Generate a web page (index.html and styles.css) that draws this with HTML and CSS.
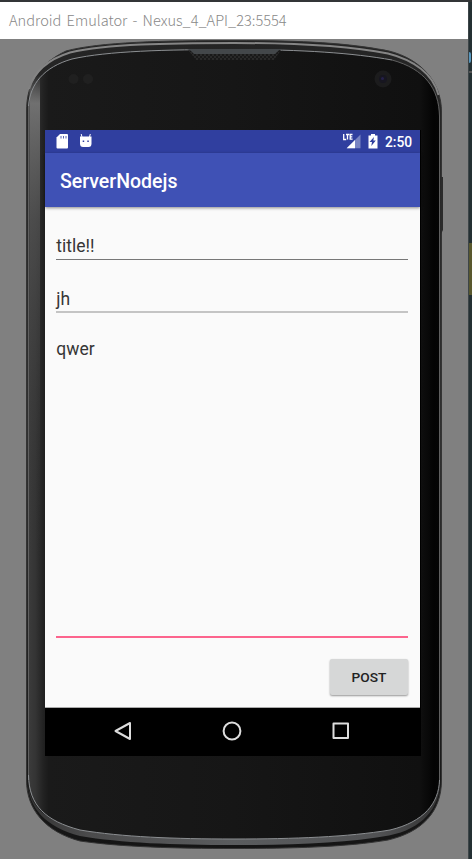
FILE: index.html
```html
<!DOCTYPE html>
<html lang="en">
<head>
<meta charset="utf-8">
<title>Android Emulator</title>
<link rel="stylesheet" href="styles.css">
</head>
<body>
<div class="desktop">
  <div class="window">
    <header class="titlebar"><span>Android Emulator - Nexus_4_API_23:5554</span></header>
    <main class="device">
      <svg class="shell" viewBox="0 39 468 820" width="468" height="820" aria-hidden="true">
        <defs>
          <linearGradient id="rim" x1="0" y1="40" x2="0" y2="849" gradientUnits="userSpaceOnUse">
            <stop offset="0" stop-color="#242424"/><stop offset=".5" stop-color="#303030"/><stop offset="1" stop-color="#151515"/>
          </linearGradient>
          <linearGradient id="face" x1="28" y1="0" x2="440" y2="0" gradientUnits="userSpaceOnUse">
            <stop offset="0" stop-color="#3c3c3c"/><stop offset=".018" stop-color="#343434"/><stop offset=".037" stop-color="#222"/><stop offset=".05" stop-color="#1a1a1a"/><stop offset=".5" stop-color="#161616"/><stop offset=".95" stop-color="#101010"/><stop offset=".985" stop-color="#040404"/><stop offset="1" stop-color="#050505"/>
          </linearGradient>
          <linearGradient id="side" x1="0" y1="0" x2="0" y2="1">
            <stop offset="0" stop-color="#777" stop-opacity="0"/><stop offset=".06" stop-color="#707070"/><stop offset=".3" stop-color="#555" stop-opacity=".7"/><stop offset="1" stop-color="#333" stop-opacity="0"/>
          </linearGradient>
          <linearGradient id="lip" x1="28" y1="0" x2="440" y2="0" gradientUnits="userSpaceOnUse">
            <stop offset="0" stop-color="#333"/><stop offset=".15" stop-color="#4b4b4c"/><stop offset=".5" stop-color="#5a5c5e"/><stop offset=".85" stop-color="#515254"/><stop offset="1" stop-color="#333"/>
          </linearGradient>
          <pattern id="mesh" width="4" height="4" patternUnits="userSpaceOnUse"><path d="M0 0h4v4H0z" fill="#292929"/><path d="M0 0h2v2H0zM2 2h2v2H2z" fill="#191919"/></pattern>
        </defs>
        <path fill="url(#rim)" stroke="#343434" d="M26.5 112C26.5 82 39 64 66 51C99 42 164 40.5 234 40.5C304 40.5 349 43 389 51C421 59 441.500 82 441.500 112V780C441.500 812 422 832 388 840C347 847 292 848.500 234 848.500C176 848.500 121 847 80 841C46 832 26.500 810 26.500 780Z"/>
        <path class="line light" d="M29 89C34 72 46 60 70 52.500C108 44 167 43 234 43C304 43 349 46 388 53.500C414 60 433 74 438.500 95"/>
        <path fill="url(#lip)" d="M28 782C29 806 46 821 80 830C122 837 174 839 234 839C294 839 348 837 390 830C424 822 439 803 440 782C440 808 422 829 389 835.500C348 843 294 845 234 845C174 845 121 843 80 836C46 827 28 808 28 782Z"/>
        <path fill="url(#face)" d="M29 106C30 84 44 67 72 59C108 51 165 50 234 50C303 50 353 53 392 60C425 69 439 89 439 116V780C439 803 424 822 390 830C348 837 294 839 234 839C174 839 122 837 80 830C46 821 29 806 29 780Z"/>
        <path fill="url(#side)" d="M29.500 84Q34 78 40 74V560H29.500Z"/>
        <path class="line silver" d="M28.500 106C30 84 44 67 72 59C108 51 165 49.500 234 49.500C303 49.500 353 53 392 60"/>
        <path class="line edge" d="M392 60C425 69 439 89 439.500 116V780M28.500 106V780"/>
        <path class="line silver" d="M28.500 775C29 806 46 821 80 830C122 837 174 839 234 839C294 839 348 837 390 830C424 822 439 803 439.500 780"/>
        <path d="M441 177h2v53l-2 4z" fill="#2b2b2b"/>
        <path d="M188 50h93l-7 10h-78z" fill="url(#mesh)"/>
        <path d="M187 49h95q-4 1-7 5h-81q-3-4-7-5z" fill="#43474a"/>
        <circle cx="73.500" cy="79" r="5" fill="#202020"/><circle cx="88" cy="79" r="5" fill="#202020"/>
        <circle cx="383" cy="79" r="8.500" fill="#1c1c1d"/><circle cx="383" cy="79" r="4" fill="#171620"/><circle cx="382.500" cy="78.500" r="1.500" fill="#25204a"/>
      </svg>
      <section class="screen">
        <div class="status">
          <svg class="status-left" width="50" height="23" viewBox="0 0 50 23">
            <path fill="#fff" d="M15 4h7q1 0 1 1v12.500q0 1-1 1H12.500q-1 0-1-1V7.500z"/><path d="M16 6v2.500M18.500 6v2.500M21 6v2.500" stroke="#303f9f" stroke-width=".8"/>
            <path fill="#fff" d="M35 6.500h11.500v7q0 3.500-3 3.500h-5.500q-3 0-3-3.500z"/><path d="M37 7l-.8-3M44.500 7l.8-3" stroke="#fff"/><path fill="#303f9f" d="M37.700 10.500h1.500v1.500h-1.500zM42.300 10.500h1.500v1.500h-1.500z"/>
          </svg>
          <svg class="status-right" width="40" height="23" viewBox="0 0 40 23">
            <path d="M20.500 4.500v13.800H6.700z" fill="#7984c2"/><path d="M15 10v8.300H6.700z" fill="#fff"/>
            <path d="M3.700 4v5.500h2.500M6 4.500h3.200M7.500 4.500v5M12.500 4.500h-2.300v4.700h2.400M10.300 6.800h2" fill="none" stroke="#fff" stroke-width="1.300"/>
            <path fill="#fff" d="M28.500 5.500h2.500V4h4v1.500h2.500v13h-9z"/><path fill="#303f9f" d="M34 7l-4.500 5H32l-.7 4 4.500-5.500h-2.500z"/>
          </svg>
          <span class="clock">2:50</span>
        </div>
        <div class="appbar"><h1>ServerNodejs</h1></div>
        <div class="form">
          <div class="field title">title!!</div>
          <div class="field name">jh</div>
          <div class="field body">qwer</div>
          <button class="post">POST</button>
        </div>
        <nav class="nav">
          <svg width="20" height="20" viewBox="0 0 20 20"><path d="M17 2v16L2.500 10z"/></svg>
          <svg width="20" height="20" viewBox="0 0 20 20"><circle cx="10" cy="10" r="8.400"/></svg>
          <svg width="20" height="20" viewBox="0 0 20 20"><path d="M2.500 2.500h14.500v14.500H2.500z"/></svg>
        </nav>
      </section>
    </main>
  </div>
  <aside class="backdrop"><i class="dot"></i><i class="rule"></i><i class="mark"></i></aside>
</div>
</body>
</html>
```
FILE: styles.css
```css
* { box-sizing: border-box; }
body { margin: 0; background: #293134; font-family: Roboto, sans-serif; }
.desktop { display: flex; width: 472px; height: 859px; padding-top: 2px; background: #333537; overflow: hidden; }
.window { width: 468px; display: flex; flex-direction: column; }
.titlebar { height: 37px; background: #fff; color: #888; display: flex; align-items: center; padding: 0 0 1px 9px; font: 300 14.6px/20px "Noto Sans CJK KR", sans-serif; word-spacing: 2px; white-space: nowrap; }
.device { position: relative; height: 820px; background: #808080; padding: 91px 48px 0 45px; }
.shell { position: absolute; inset: 0; }
.line { fill: none; }
.light { stroke: #858585; stroke-width: 2; }
.silver { stroke: #8c8f92; stroke-width: 1; }
.edge { stroke: #606060; stroke-width: 1; }
.screen { position: relative; width: 375px; height: 626px; display: flex; flex-direction: column; background: #fafafa; box-shadow: 1px 0 #000; }
.status { height: 23px; background: #303f9f; display: flex; align-items: center; }
.status-right { margin-left: auto; margin-right: 3px; }
.clock { width: 37px; padding-left: 2px; padding-top: 1px; color: #fff; font-size: 13.8px; font-weight: 500; line-height: 23px; }
.appbar { height: 54px; background: #3f51b5; color: #fff; padding-left: 15px; display: flex; align-items: center; box-shadow: 0 1px 3px rgba(0,0,0,.45); }
h1 { margin: 4px 0 0; font-size: 19.5px; font-weight: 500; line-height: 24px; }
.form { height: 501px; padding: 24px 12px 0 11px; display: flex; flex-direction: column; border-bottom: 1px solid #aaa; }
.field { color: #363636; font-size: 17.5px; padding-left: .3px; flex: none; }
.title { height: 29px; line-height: 31px; border-bottom: 1px solid #777; }
.name { height: 30px; margin-top: 23px; line-height: 32px; border-bottom: 2px solid #c4c4c4; }
.body { height: 303px; margin-top: 22px; line-height: 29px; border-bottom: 2px solid #fc648d; }
.post { margin: 21px 0 0; align-self: flex-end; width: 78px; height: 36px; border: 0; border-radius: 2px; background: #d6d7d7; color: #222; font: 500 13.7px/36px Roboto, sans-serif; padding: 0; box-shadow: 0 1px 2px rgba(0,0,0,.4); }
.nav { height: 48px; background: #000; display: flex; justify-content: space-between; align-items: center; padding: 0 69px 2px 67.500px; }
.nav svg { fill: none; stroke: #ddd; stroke-width: 2; stroke-linejoin: round; }
.backdrop { width: 4px; background: #243033; border-left: 1px solid #3d4548; display: flex; flex-direction: column; padding-top: 50px; }
.dot { height: 11px; background: #5796bd; border-radius: 0 5px 5px 0; width: 2px; }
.rule { height: 2px; margin-top: 8px; background: #555; }
.mark { height: 52px; margin-top: 170px; background: #59582e; }
```
